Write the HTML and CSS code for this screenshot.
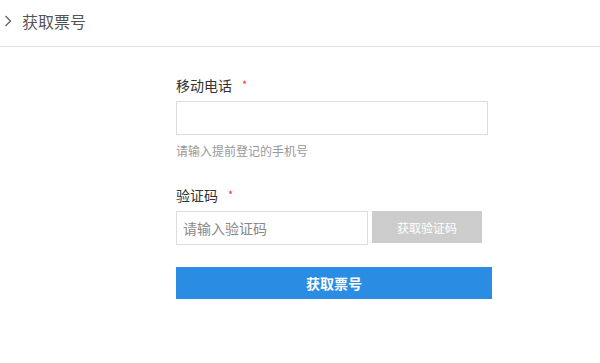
FILE: index.html
```html
<!DOCTYPE html>
<html lang="zh-CN">
<head>
  <meta charset="UTF-8" />
  <title>获取票号</title>
  <link rel="stylesheet" href="styles.css">
</head>
<body>
  <div class="header-bar">
    <svg class="back" width="8" height="12" viewBox="0 0 8 12"><path d="M1.5 1 L6.5 6 L1.5 11" fill="none" stroke="#666" stroke-width="1.4"/></svg>
    <h2>获取票号</h2>
  </div>

  <form class="ticket-form">
    <label class="field-label">移动电话<span class="req">*</span></label>
    <input type="text" class="phone-input">
    <p class="hint">请输入提前登记的手机号</p>

    <label class="field-label code-label">验证码<span class="req">*</span></label>
    <div class="code-row">
      <input type="text" class="code-input" placeholder="请输入验证码">
      <button type="button" class="code-btn">获取验证码</button>
    </div>

    <button type="button" class="submit-btn">获取票号</button>
  </form>
</body>
</html>
```

FILE: styles.css
```css
body {
  margin: 0;
  font-family: "Noto Sans CJK SC", "Liberation Sans", sans-serif;
  background: #fff;
  color: #333;
}

.header-bar {
  display: flex;
  align-items: center;
  height: 46px;
  padding-left: 4px;
  border-bottom: 1px solid #e0e0e0;
}

.back {
  margin-top: -5px;
}

.header-bar h2 {
  margin: -5px 0 0 10px;
  font-size: 16px;
  font-weight: normal;
  color: #555;
  line-height: 1;
}

.ticket-form {
  width: 316px;
  margin-left: 176px;
  padding-top: 28px;
}

.field-label {
  display: flex;
  align-items: center;
  font-size: 14px;
  line-height: 20px;
  height: 20px;
  color: #333;
}

.req {
  color: #e33;
  font-size: 11px;
  margin-left: 10px;
  margin-top: -3px;
}

input {
  box-sizing: border-box;
  height: 34px;
  border: 1px solid #ddd;
  font-family: inherit;
  font-size: 14px;
  padding: 0 6px;
  outline: none;
}

.phone-input {
  display: block;
  width: 312px;
  margin-top: 6px;
}

.hint {
  margin: 8px 0 0;
  font-size: 12px;
  line-height: 16px;
  color: #999;
}

.code-label {
  margin-top: 26px;
}

.code-row {
  display: flex;
  gap: 4px;
  margin-top: 6px;
}

.code-input {
  width: 192px;
}

.code-input::placeholder {
  color: #888;
}

.code-btn {
  width: 110px;
  height: 32px;
  border: none;
  background: #ccc;
  color: #fff;
  font-family: inherit;
  font-size: 12px;
}

.submit-btn {
  display: block;
  width: 316px;
  height: 32px;
  margin-top: 22px;
  border: none;
  background: #2a8ce2;
  color: #fff;
  font-family: inherit;
  font-size: 14px;
  font-weight: bold;
}
```
